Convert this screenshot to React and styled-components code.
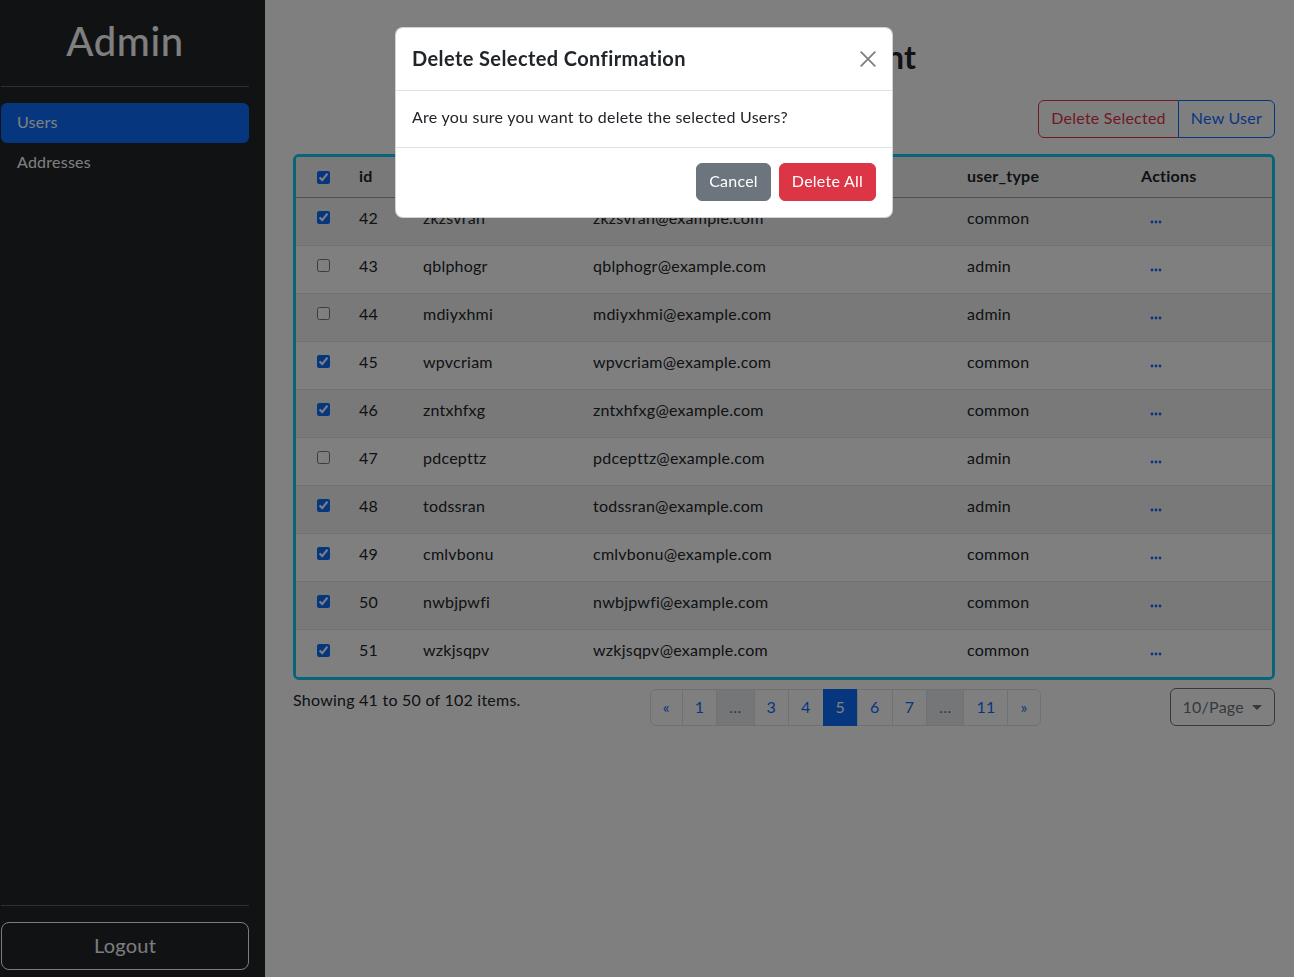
import styled, { createGlobalStyle } from "styled-components"

const users = [
    { id: 42, name: "zkzsvran", type: "common", checked: true },
    { id: 43, name: "qblphogr", type: "admin", checked: false },
    { id: 44, name: "mdiyxhmi", type: "admin", checked: false },
    { id: 45, name: "wpvcriam", type: "common", checked: true },
    { id: 46, name: "zntxhfxg", type: "common", checked: true },
    { id: 47, name: "pdcepttz", type: "admin", checked: false },
    { id: 48, name: "todssran", type: "admin", checked: true },
    { id: 49, name: "cmlvbonu", type: "common", checked: true },
    { id: 50, name: "nwbjpwfi", type: "common", checked: true },
    { id: 51, name: "wzkjsqpv", type: "common", checked: true },
]

const pages = [
    { label: "«" },
    { label: "1" },
    { label: "…", disabled: true },
    { label: "3" },
    { label: "4" },
    { label: "5", active: true },
    { label: "6" },
    { label: "7" },
    { label: "…", disabled: true },
    { label: "11" },
    { label: "»" },
]

function Dots(){
    return(
        <svg width="12" height="4" viewBox="0 0 12 4">
            <circle cx="2" cy="2" r="1.4" fill="#0d6efd"/>
            <circle cx="6" cy="2" r="1.4" fill="#0d6efd"/>
            <circle cx="10" cy="2" r="1.4" fill="#0d6efd"/>
        </svg>
    )
}

export default function App(){
    return(
        <>
            <GlobalStyle/>
            <Layout>
                <Sidebar>
                    <Brand>Admin</Brand>
                    <Rule/>
                    <Nav>
                        <NavLink $active>Users</NavLink>
                        <NavLink>Addresses</NavLink>
                    </Nav>
                    <Bottom>
                        <Rule/>
                        <LogoutButton>Logout</LogoutButton>
                    </Bottom>
                </Sidebar>

                <Main>
                    <Title>User Management</Title>
                    <Toolbar>
                        <BtnGroup>
                            <OutlineButton $color="#dc3545">Delete Selected</OutlineButton>
                            <OutlineButton $color="#0d6efd">New User</OutlineButton>
                        </BtnGroup>
                    </Toolbar>

                    <TableWrap>
                        <Table>
                            <colgroup>
                                <col style={{width: 55}}/>
                                <col style={{width: 64}}/>
                                <col style={{width: 170}}/>
                                <col style={{width: 374}}/>
                                <col style={{width: 174}}/>
                                <col/>
                            </colgroup>
                            <thead>
                                <tr>
                                    <Th $center><Check type="checkbox" defaultChecked/></Th>
                                    <Th>id</Th>
                                    <Th>username</Th>
                                    <Th>email</Th>
                                    <Th>user_type</Th>
                                    <Th>Actions</Th>
                                </tr>
                            </thead>
                            <tbody>
                                {users.map((u, i) => (
                                    <Row key={u.id} $striped={i % 2 === 0}>
                                        <Td $center><Check type="checkbox" defaultChecked={u.checked} $lift/></Td>
                                        <Td>{u.id}</Td>
                                        <Td>{u.name}</Td>
                                        <Td>{u.name}@example.com</Td>
                                        <Td>{u.type}</Td>
                                        <Td><ActionBtn><Dots/></ActionBtn></Td>
                                    </Row>
                                ))}
                            </tbody>
                        </Table>
                    </TableWrap>

                    <Footer>
                        <Showing>Showing 41 to 50 of 102 items.</Showing>
                        <Pagination>
                            {pages.map((p, i) => (
                                <PageItem key={i} $active={p.active} $disabled={p.disabled}>{p.label}</PageItem>
                            ))}
                        </Pagination>
                        <PerPage>10/Page</PerPage>
                    </Footer>
                </Main>
            </Layout>

            <Backdrop/>
            <ModalLayer>
                <Dialog>
                    <ModalHeader>
                        <ModalTitle>Delete Selected Confirmation</ModalTitle>
                        <CloseBtn>
                            <svg width="18" height="18" viewBox="0 0 16 16">
                                <path d="M1.5 1.5 14.5 14.5M14.5 1.5 1.5 14.5" stroke="#000" strokeWidth="1.6" fill="none"/>
                            </svg>
                        </CloseBtn>
                    </ModalHeader>
                    <ModalBody>Are you sure you want to delete the selected Users?</ModalBody>
                    <ModalFooter>
                        <SolidButton $bg="#6c757d">Cancel</SolidButton>
                        <SolidButton $bg="#dc3545">Delete All</SolidButton>
                    </ModalFooter>
                </Dialog>
            </ModalLayer>
        </>
    )
}

const GlobalStyle = createGlobalStyle`
    body{
        margin: 0;
        font-family: Lato, "Noto Sans", sans-serif;
        font-size: 16px;
        line-height: 1.5;
        letter-spacing: 0.24px;
        color: #212529;
        background: #ffffff;
    }
    *{
        box-sizing: border-box;
    }
    button{
        letter-spacing: inherit;
    }
`
const Layout = styled.div`
    display: flex;
    min-height: 100vh;
`
const Sidebar = styled.aside`
    width: 265px;
    flex-shrink: 0;
    background: #212529;
    padding: 17px 16px 7px 1px;
    display: flex;
    flex-direction: column;
`
const Brand = styled.h1`
    margin: 0 0 21px;
    font-size: 40px;
    line-height: 48px;
    font-weight: 500;
    letter-spacing: 0.6px;
    color: #ffffff;
    text-align: center;
`
const Rule = styled.hr`
    margin: 0;
    border: 0;
    border-top: 1px solid rgba(255, 255, 255, 0.28);
`
const Nav = styled.nav`
    margin-top: 16px;
    display: flex;
    flex-direction: column;
`
const NavLink = styled.a`
    display: block;
    height: 40px;
    padding: 7px 16px 9px;
    border-radius: 6px;
    color: #ffffff;
    background: ${p => p.$active ? "#0d6efd" : "transparent"};
`
const Bottom = styled.div`
    margin-top: auto;
    display: flex;
    flex-direction: column;
    gap: 16px;
`
const LogoutButton = styled.button`
    height: 48px;
    padding-bottom: 3px;
    font-family: inherit;
    font-size: 20px;
    color: #f8f9fa;
    background: transparent;
    border: 1px solid #f8f9fa;
    border-radius: 8px;
`
const Main = styled.main`
    flex: 1;
    padding: 38px 19px 0 28px;
`
const Title = styled.h2`
    margin: 0;
    font-size: 32px;
    line-height: 38px;
    font-weight: 700;
    text-align: center;
`
const Toolbar = styled.div`
    margin-top: 24px;
    display: flex;
    justify-content: flex-end;
`
const BtnGroup = styled.div`
    display: flex;
    button:first-child{
        border-radius: 6px 0 0 6px;
    }
    button:last-child{
        border-radius: 0 6px 6px 0;
        margin-left: -1px;
    }
`
const OutlineButton = styled.button`
    height: 38px;
    padding: 4px 12px 8px;
    font-family: inherit;
    font-size: 16px;
    color: ${p => p.$color};
    background: transparent;
    border: 1px solid ${p => p.$color};
`
const TableWrap = styled.div`
    margin-top: 16px;
    border: 3px solid #0dcaf0;
    border-radius: 6px;
    overflow: hidden;
`
const Table = styled.table`
    width: 100%;
    border-collapse: collapse;
    table-layout: fixed;
    background: #ffffff;
    thead tr{
        background: #f2f2f2;
    }
`
const Th = styled.th`
    height: 40px;
    padding: 0 8px 2px;
    text-align: ${p => p.$center ? "center" : "left"};
    font-weight: 700;
    border-bottom: 1px solid #a0a0a0;
`
const Row = styled.tr`
    background: ${p => p.$striped ? "#f2f2f2" : "#ffffff"};
    &:not(:last-child) td{
        border-bottom: 1px solid #dee2e6;
    }
`
const Td = styled.td`
    height: 48px;
    padding: 0 8px 6px;
    text-align: ${p => p.$center ? "center" : "left"};
    vertical-align: middle;
`
const Check = styled.input`
    width: 13px;
    height: 13px;
    margin: 0 0 ${p => p.$lift ? "4px" : "1px"};
    accent-color: #0d6efd;
    vertical-align: middle;
`
const ActionBtn = styled.span`
    display: inline-flex;
    margin-left: 9px;
    padding-top: 4px;
`
const Footer = styled.div`
    margin-top: 8px;
    display: flex;
    justify-content: space-between;
    align-items: flex-start;
`
const Showing = styled.div`
    margin-top: 0;
`
const Pagination = styled.div`
    display: flex;
    margin-top: 1px;
`
const PageItem = styled.span`
    display: block;
    height: 37px;
    padding: 5px 12px 6px;
    margin-left: -1px;
    border: 1px solid #dee2e6;
    color: ${p => p.$active ? "#ffffff" : p.$disabled ? "#6c757d" : "#0d6efd"};
    background: ${p => p.$active ? "#0d6efd" : p.$disabled ? "#e9ecef" : "#ffffff"};
    border-color: ${p => p.$active ? "#0d6efd" : "#dee2e6"};
    &:first-child{
        margin-left: 0;
        border-radius: 6px 0 0 6px;
    }
    &:last-child{
        border-radius: 0 6px 6px 0;
    }
`
const PerPage = styled.button`
    height: 38px;
    padding: 5px 12px 7px;
    font-family: inherit;
    font-size: 16px;
    color: #6c757d;
    background: transparent;
    border: 1px solid #6c757d;
    border-radius: 6px;
    &::after{
        content: "";
        display: inline-block;
        margin-left: 8px;
        vertical-align: 3px;
        border-top: 5px solid;
        border-left: 5px solid transparent;
        border-right: 5px solid transparent;
    }
`
const Backdrop = styled.div`
    position: fixed;
    inset: 0;
    background: rgba(0, 0, 0, 0.5);
`
const ModalLayer = styled.div`
    position: fixed;
    inset: 0;
    padding: 27px 6px 0 0;
`
const Dialog = styled.div`
    width: 498px;
    margin: 0 auto;
    background: #ffffff;
    border: 1px solid rgba(0, 0, 0, 0.175);
    border-radius: 8px;
`
const ModalHeader = styled.div`
    display: flex;
    align-items: center;
    justify-content: space-between;
    height: 63px;
    padding: 0 15px 3px 16px;
    border-bottom: 1px solid #dee2e6;
`
const ModalTitle = styled.h5`
    margin: 0;
    font-size: 20px;
    line-height: 30px;
    font-weight: 700;
    letter-spacing: 0.4px;
`
const CloseBtn = styled.button`
    display: flex;
    padding: 0;
    margin-top: 3px;
    background: transparent;
    border: 0;
    opacity: 0.5;
`
const ModalBody = styled.div`
    height: 56px;
    padding: 14px 16px 0;
`
const ModalFooter = styled.div`
    display: flex;
    justify-content: flex-end;
    gap: 8px;
    padding: 15px 16px 16px;
    border-top: 1px solid #dee2e6;
`
const SolidButton = styled.button`
    height: 38px;
    padding: 4px 12px 8px;
    font-family: inherit;
    font-size: 16px;
    color: #ffffff;
    background: ${p => p.$bg};
    border: 1px solid ${p => p.$bg};
    border-radius: 6px;
`
